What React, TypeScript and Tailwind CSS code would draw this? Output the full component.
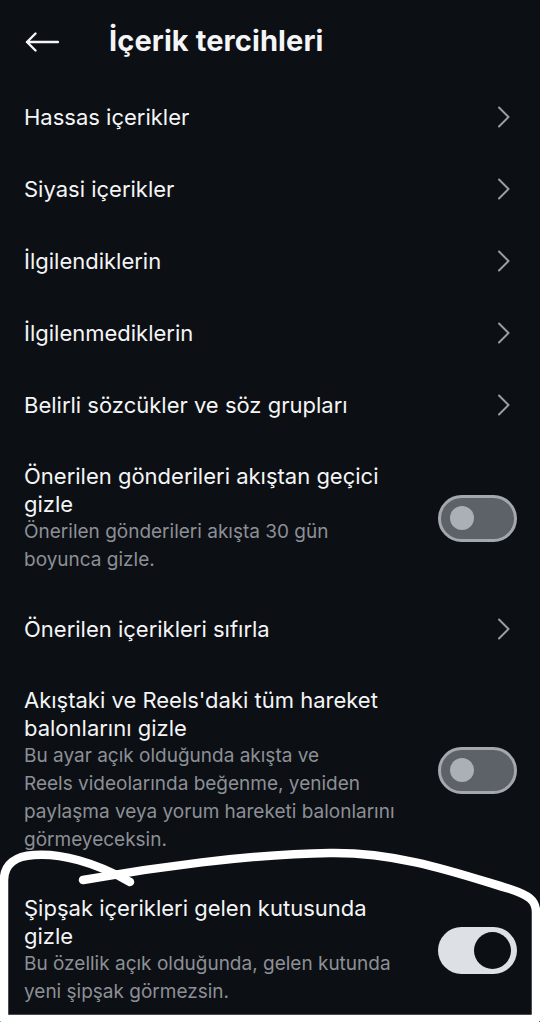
import React from 'react';

type NavItem = { kind: 'nav'; title: string };
type ToggleItem = { kind: 'toggle'; title: string[]; subtitle: string[]; on: boolean };

const items: (NavItem | ToggleItem)[] = [
    { kind: 'nav', title: 'Hassas içerikler' },
    { kind: 'nav', title: 'Siyasi içerikler' },
    { kind: 'nav', title: 'İlgilendiklerin' },
    { kind: 'nav', title: 'İlgilenmediklerin' },
    { kind: 'nav', title: 'Belirli sözcükler ve söz grupları' },
    {
        kind: 'toggle',
        title: ['Önerilen gönderileri akıştan geçici', 'gizle'],
        subtitle: ['Önerilen gönderileri akışta 30 gün', 'boyunca gizle.'],
        on: false,
    },
    { kind: 'nav', title: 'Önerilen içerikleri sıfırla' },
    {
        kind: 'toggle',
        title: ["Akıştaki ve Reels'daki tüm hareket", 'balonlarını gizle'],
        subtitle: [
            'Bu ayar açık olduğunda akışta ve',
            'Reels videolarında beğenme, yeniden',
            'paylaşma veya yorum hareketi balonlarını',
            'görmeyeceksin.',
        ],
        on: false,
    },
    {
        kind: 'toggle',
        title: ['Şipşak içerikleri gelen kutusunda', 'gizle'],
        subtitle: ['Bu özellik açık olduğunda, gelen kutunda', 'yeni şipşak görmezsin.'],
        on: true,
    },
];

function Chevron() {
    return (
        <svg width="14" height="22" viewBox="0 0 14 22" fill="none" className="shrink-0">
            <path d="M2 1.5 L11.5 11 L2 20.5" stroke="#9a9ea4" strokeWidth="2" strokeLinecap="round" strokeLinejoin="round" />
        </svg>
    );
}

function Toggle({ on }: { on: boolean }) {
    if (on) {
        return (
            <div className="shrink-0 w-[79px] h-[47px] rounded-full bg-[#dde0e5] flex items-center justify-end pr-[6px]">
                <div className="w-[37px] h-[37px] rounded-full bg-[#0c0f14]" />
            </div>
        );
    }
    return (
        <div className="shrink-0 w-[79px] h-[47px] rounded-full bg-[#5d6168] border-[3px] border-[#a3a8ae] flex items-center pl-[9px]">
            <div className="w-[24px] h-[24px] rounded-full bg-[#abb0b7]" />
        </div>
    );
}

export default function App() {
    return (
        <div
            className="relative w-[540px] h-[1022px] overflow-hidden bg-[#0c0f14] text-[#f4f5f6]"
            style={{ fontFamily: 'Inter, "Noto Sans", sans-serif' }}
        >
            {/* Header */}
            <div className="h-[81px] flex items-center pl-[25px]">
                <svg width="34" height="20" viewBox="0 0 34 20" fill="none" className="mt-[3px]">
                    <path d="M33 10 H2 M10.5 1.5 L2 10 L10.5 18.5" stroke="#f4f5f6" strokeWidth="2.4" strokeLinecap="round" strokeLinejoin="round" />
                </svg>
                <h1 className="ml-[50px] text-[29px] font-bold tracking-[0.1px] leading-[36px]">İçerik tercihleri</h1>
            </div>

            {/* List */}
            <div className="flex flex-col">
                {items.map((item, i) =>
                    item.kind === 'nav' ? (
                        <div key={i} className="h-[72px] flex items-center justify-between pl-[24px] pr-[29px]">
                            <span className="text-[22px] leading-[28px]">{item.title}</span>
                            <Chevron />
                        </div>
                    ) : (
                        <div key={i} className="flex items-center justify-between pl-[24px] pr-[23px] pt-[21px] pb-[19px] gap-[16px]">
                            <div className="flex flex-col whitespace-nowrap">
                                {item.title.map((line) => (
                                    <span key={line} className="text-[22px] leading-[28px]">{line}</span>
                                ))}
                                {item.subtitle.map((line) => (
                                    <span key={line} className="text-[19px] leading-[28px] text-[#8c9096]">{line}</span>
                                ))}
                            </div>
                            <Toggle on={item.on} />
                        </div>
                    )
                )}
            </div>

            {/* Hand-drawn annotation */}
            <svg className="absolute inset-0 pointer-events-none" width="540" height="1022" viewBox="0 0 540 1022" fill="none">
                <path
                    d="M4 1019 L4 880 C4 864 16 856 34 855 C60 853 95 862 130 882"
                    stroke="#ffffff"
                    strokeWidth="8.5"
                    strokeLinecap="round"
                    strokeLinejoin="round"
                />
                <path
                    d="M83 880 C150 868 250 854 330 853 C400 852 460 874 510 889 C528 895 536 900 536 912 L536 1019 L4 1019"
                    stroke="#ffffff"
                    strokeWidth="8.5"
                    strokeLinecap="round"
                    strokeLinejoin="round"
                />
            </svg>
        </div>
    );
}
